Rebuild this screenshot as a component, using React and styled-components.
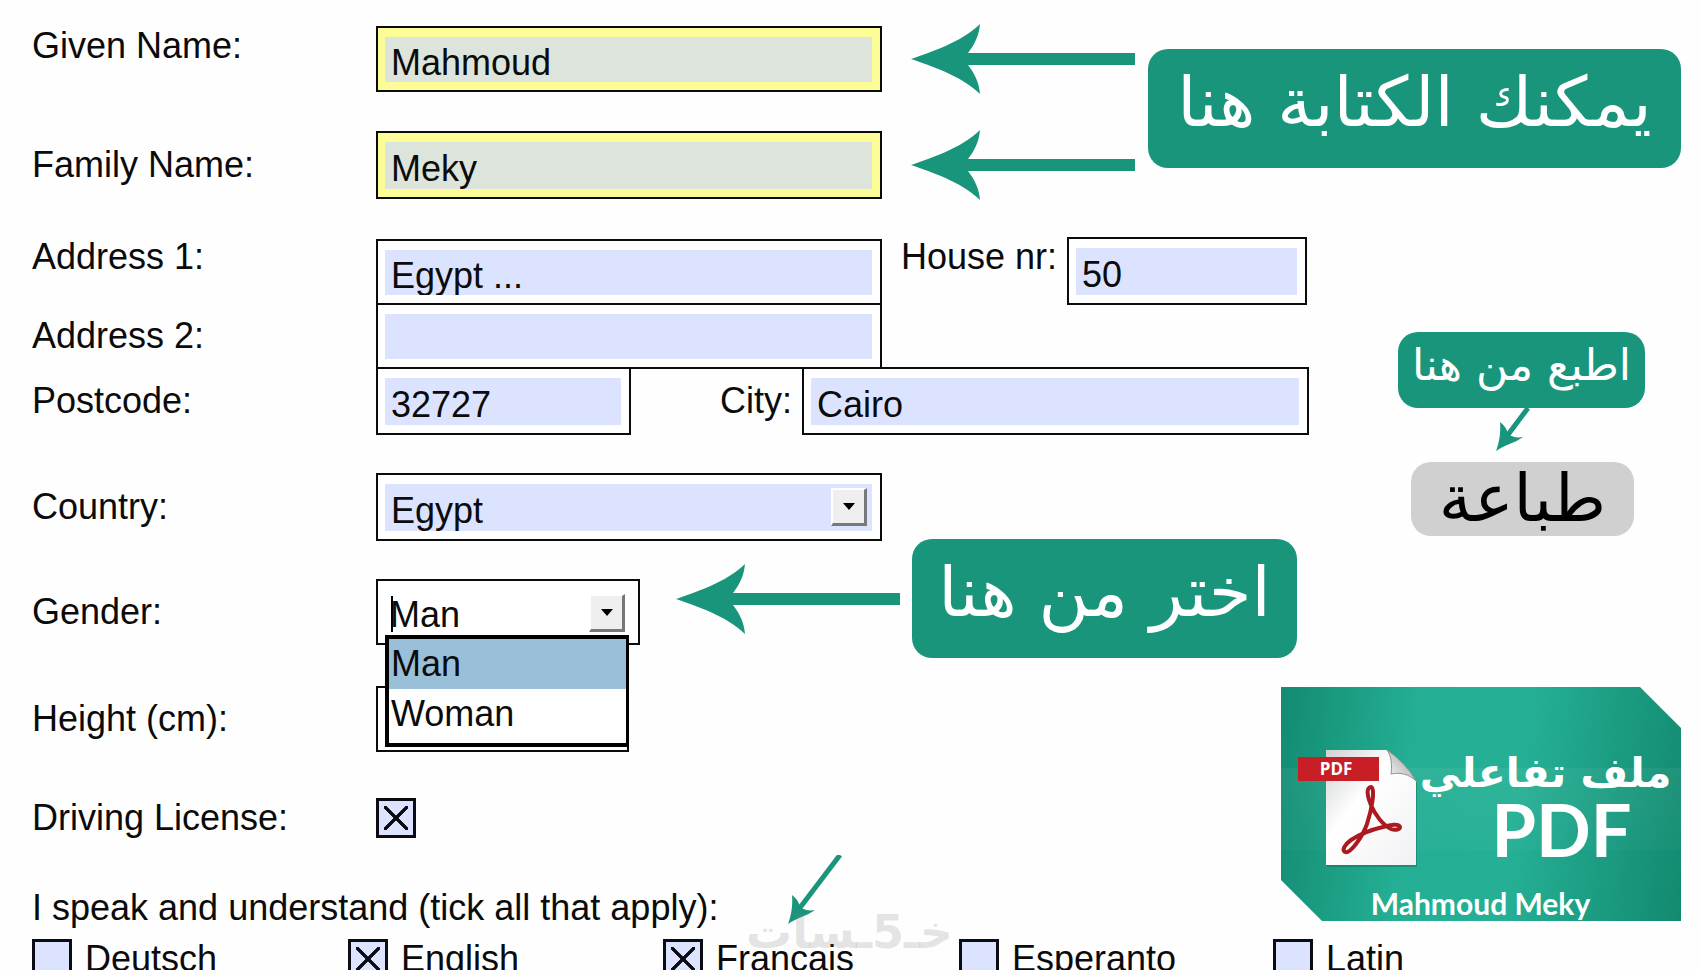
import React,{useState} from 'react'
import styled, {createGlobalStyle} from 'styled-components'

const green = '#19957c';
const fieldBlue = '#dce3ff';

const GlobalStyle = createGlobalStyle`
   *{
       box-sizing:border-box;
   }
   body{
       margin:0;
       background:#fefefe;
       color:#0b0b0b;
       font-family:"Liberation Sans", Arial, sans-serif;
       font-size:36px;
       line-height:40px;
   }
   input, select, button{
       font:inherit;
       color:inherit;
   }
`;
const Page = styled.form`
   height:100vh;
   overflow:hidden;
   padding:26px 19px 0 32px;
`;
const Names = styled.section`
   display:flex;
   align-items:flex-start;
   gap:13px;
   margin-bottom:38px;
`;
const NameRows = styled.div`
   display:flex;
   flex-direction:column;
   gap:39px;
`;
const Body = styled.div`
   display:grid;
   grid-template-columns:1fr 28px 372px;
`;
const Details = styled.section`
   grid-column:1 / 3;
   grid-row:1;
`;
const Side = styled.aside`
   grid-column:2 / 4;
   grid-row:1;
   display:flex;
   flex-direction:column;
   padding-top:95px;
`;
const Row = styled.div`
   display:flex;
   align-items:${props=>props.$align || 'center'};
   margin-top:${props=>props.$space || 0}px;
`;
const Label = styled.label`
   flex:none;
   width:344px;
   white-space:nowrap;
`;
const SideLabel = styled.label`
   flex:1;
   text-align:right;
   white-space:nowrap;
   padding-right:10px;
`;
const HouseLabel = styled.label`
   flex:none;
   width:185px;
   white-space:nowrap;
   padding-left:19px;
`;
const Box = styled.div`
   position:relative;
   flex:none;
   align-self:flex-end;
   width:${props=>props.$width || 506}px;
   height:${props=>props.$short ? 66 : 68}px;
   padding:9px 8px 8px 7px;
   border:2px solid #0b0b0b;
   background:${props=>props.$required ? '#fdfd98' : '#fff'};
`;
const Input = styled.input`
   display:block;
   width:100%;
   height:100%;
   padding:7px 6px 0;
   border:0;
   outline:0;
   border-radius:0;
   background:${props=>props.$required ? '#dce4dc' : fieldBlue};
`;
const Select = styled.select`
   display:block;
   width:100%;
   height:100%;
   padding:${props=>props.$open ? '5px 5px 0' : '7px 6px 0'};
   border:0;
   outline:0;
   border-radius:0;
   appearance:none;
   background:${props=>props.$open ? '#fff' : fieldBlue};
`;
const DropMark = styled.span`
   position:absolute;
   top:13px;
   right:13px;
   display:flex;
   align-items:center;
   justify-content:center;
   width:36px;
   height:38px;
   background:#efefef;
   border:2px solid #fff;
   border-right:3px solid #77777c;
   border-bottom:3px solid #77777c;
   pointer-events:none;
   &::after{
       content:'';
       border:6px solid transparent;
       border-top:7px solid #000;
       border-bottom:0;
   }
`;
const Caret = styled.span`
   position:absolute;
   top:15px;
   left:13px;
   width:2px;
   height:36px;
   background:#000;
`;
const Menu = styled.ul`
   position:absolute;
   z-index:2;
   top:54px;
   left:7px;
   width:244px;
   margin:0;
   padding:0 0 4px;
   list-style:none;
   border:4px solid #000;
   border-right-width:3px;
   background:#fff;
`;
const Option = styled.li`
   height:50px;
   padding:5px 2px;
   background:${props=>props['aria-selected'] ? '#9abfd9' : '#fff'};
   cursor:pointer;
`;
const Check = styled.input`
   appearance:none;
   flex:none;
   width:40px;
   height:40px;
   margin:0;
   border:3px solid #0b0b14;
   background:${fieldBlue};
   &:checked{
       background:
          linear-gradient(45deg, transparent 44%, #0b0b14 46%, #0b0b14 54%, transparent 56%) center / 24px 24px no-repeat,
          linear-gradient(-45deg, transparent 44%, #0b0b14 46%, #0b0b14 54%, transparent 56%) center / 24px 24px no-repeat,
          ${fieldBlue};
   }
`;
const QuestionRow = styled.div`
   display:flex;
   align-items:flex-end;
   gap:70px;
   height:40px;
   margin-top:-33px;
`;
const QuestionArrow = styled.div`
   padding-bottom:4px;
`;
const Languages = styled.div`
   position:relative;
   display:grid;
   grid-template-columns:316px 315px 296px 314px 1fr;
   margin-top:11px;
`;
const Language = styled.label`
   display:flex;
   gap:13px;
`;
const Callout = styled.p`
   flex:${props=>props.$grow ? 1 : 'none'};
   width:${props=>props.$grow ? 'auto' : '385px'};
   height:119px;
   margin:${props=>props.$grow ? '23px 0 0' : 0};
   border-radius:20px;
   background:${green};
   color:#fff;
   font-family:"DejaVu Sans", sans-serif;
   font-size:69px;
   line-height:106px;
   text-align:center;
   white-space:nowrap;
`;
const Pointer = styled.div`
   display:flex;
   align-items:center;
   align-self:flex-start;
   gap:12px;
   margin:-40px 0 -20px 36px;
`;
const ArrowSvg = styled.svg`
   display:block;
   flex:none;
   fill:${green};
`;
const NameArrow = styled.div`
   margin:-3px 0 -3px 29px;
`;
const PrintHint = styled.p`
   width:247px;
   height:76px;
   margin:0 0 0 117px;
   border-radius:20px;
   background:${green};
   color:#fff;
   font-family:"DejaVu Sans", sans-serif;
   font-size:44px;
   line-height:66px;
   text-align:center;
   white-space:nowrap;
`;
const PrintArrow = styled.div`
   height:54px;
   padding-left:215px;
`;
const PrintButton = styled.button`
   width:223px;
   height:74px;
   margin-left:130px;
   padding:0;
   border:0;
   border-radius:20px;
   background:#d0d0d0;
   color:#000;
   font-family:"DejaVu Sans", sans-serif;
   font-size:66px;
   line-height:66px;
   cursor:pointer;
`;
const Card = styled.div`
   display:flex;
   flex-direction:column;
   align-items:center;
   height:234px;
   margin-top:151px;
   padding:62px 8px 0 17px;
   color:#fff;
   background:
      linear-gradient(180deg, transparent 81px, rgba(255,255,255,.05) 81px, rgba(255,255,255,.02) 163px, transparent 163px),
      linear-gradient(97deg, #128b71 0%, #24ae93 32%, #25b095 58%, #128a70 100%);
   clip-path:polygon(0 0, calc(100% - 41px) 0, 100% 41px, 100% 100%, 41px 100%, 0 calc(100% - 41px));
`;
const CardTop = styled.div`
   display:flex;
   width:100%;
   height:144px;
`;
const CardTitle = styled.div`
   flex:1;
   text-align:center;
   font-family:"DejaVu Sans", sans-serif;
   font-weight:bold;
   font-size:41px;
   line-height:48px;
   white-space:nowrap;
`;
const CardWord = styled.div`
   padding-left:32px;
   font-family:Lato, sans-serif;
   font-size:72px;
   line-height:64px;
`;
const CardName = styled.div`
   padding-right:10px;
   font-family:Lato, sans-serif;
   font-weight:bold;
   font-size:30px;
   line-height:36px;
`;
const Watermark = styled.div`
   position:absolute;
   top:-32px;
   left:714px;
   display:flex;
   direction:rtl;
   color:rgba(120,120,120,.2);
   font-family:"DejaVu Sans", sans-serif;
   font-weight:bold;
   font-size:46px;
   line-height:50px;
   pointer-events:none;
`;

const LeftArrow = () => (
    <ArrowSvg width="224" height="72" viewBox="0 0 224 72" aria-hidden="true">
        <path d="M0 36C20 29 49 20 69 1C68 12 64 21 57 30H224V42H57C64 51 68 60 69 71C49 52 20 43 0 36Z" />
    </ArrowSvg>
)

const DownArrow = ({width, height}) => (
    <ArrowSvg width={width} height={height} viewBox={`0 0 ${width} ${height}`} aria-hidden="true">
        <line x1={width - 2} y1="0" x2="11" y2={height - 15} stroke={green} strokeWidth="5" />
        <path transform={`translate(0 ${height})`} d="M0 0C3 -8 5 -18 4 -29C8 -26 11 -22 12 -17C16 -14 21 -13 27 -14C19 -8 8 -6 0 0Z" />
    </ArrowSvg>
)

const PdfIcon = () => (
    <svg width="120" height="118" viewBox="0 0 120 118" aria-hidden="true">
        <defs>
            <linearGradient id="sheet" x1="0" y1="0" x2="1" y2="1">
                <stop offset="0" stopColor="#cfd1d2" />
                <stop offset=".4" stopColor="#ffffff" />
                <stop offset="1" stopColor="#f1f1f4" />
            </linearGradient>
            <linearGradient id="fold" x1="0" y1="1" x2="1" y2="0">
                <stop offset="0" stopColor="#ffffff" />
                <stop offset="1" stopColor="#8f9496" />
            </linearGradient>
        </defs>
        <path d="M29 3H90Q108 17 119 34V118H29Z" fill="#0d6f5b" opacity=".5" />
        <path d="M28 1H89Q107 14 118 32V116H28Z" fill="url(#sheet)" />
        <path d="M89 1C94 8 94 18 93 25C102 23 111 25 118 32Q108 14 89 1Z" fill="url(#fold)" stroke="#8d9193" strokeWidth="1" />
        <rect x="0" y="8" width="81" height="24" fill="#c81f27" />
        <text x="38" y="26" textAnchor="middle" fill="#fff" fontFamily="Open Sans, sans-serif" fontWeight="bold" fontSize="17">PDF</text>
        <path
            d="M73 38C68 38 69 48 73 56C77 66 85 76 93 80C98 82 102 80 102 78C101 74 92 76 85 78C72 81 62 85 53 91C46 96 44 101 47 103C52 105 64 89 69 75C73 63 78 39 73 38Z"
            fill="none" stroke="#ab1a20" strokeWidth="4" strokeLinejoin="round"
        />
    </svg>
)

const Question = () => (
    <QuestionRow>
        <span>I speak and understand (tick all that apply):</span>
        <QuestionArrow><DownArrow width={54} height={69} /></QuestionArrow>
    </QuestionRow>
)

const languages = ['Deutsch', 'English', 'Français', 'Esperanto', 'Latin'];

function App() {
    const[values, setValues] = useState({
        given:'Mahmoud', family:'Meky', address1:'Egypt ...', address2:'',
        house:'50', postcode:'32727', city:'Cairo', country:'Egypt', gender:'Man'
    });
    const[license, setLicense] = useState(true);
    const[spoken, setSpoken] = useState(['English', 'Français']);

    const set = (name, value) => setValues({...values, [name]:value});
    const bind = name => ({id:name, name, value:values[name], onChange:e=>set(name, e.target.value)});
    const toggle = lang => setSpoken(
        spoken.includes(lang) ? spoken.filter(l=>l!==lang) : [...spoken, lang]
    );

    return (
        <>
            <GlobalStyle />
            <Page onSubmit={e=>e.preventDefault()}>
                <Names>
                    <NameRows>
                        <Row $align="flex-start">
                            <Label htmlFor="given">Given Name:</Label>
                            <Box $short $required><Input type="text" $required {...bind('given')} /></Box>
                            <NameArrow><LeftArrow /></NameArrow>
                        </Row>
                        <Row>
                            <Label htmlFor="family">Family Name:</Label>
                            <Box $required><Input type="text" $required {...bind('family')} /></Box>
                            <NameArrow><LeftArrow /></NameArrow>
                        </Row>
                    </NameRows>
                    <Callout $grow lang="ar" dir="rtl">يمكنك الكتابة هنا</Callout>
                </Names>

                <Body>
                    <Details>
                        <Row $align="flex-start">
                            <Label htmlFor="address1">Address 1:</Label>
                            <Box $short><Input type="text" {...bind('address1')} /></Box>
                            <HouseLabel htmlFor="house">House nr:</HouseLabel>
                            <Box $width={240}><Input type="text" {...bind('house')} /></Box>
                        </Row>
                        <Row $space={-2}>
                            <Label htmlFor="address2">Address 2:</Label>
                            <Box $short><Input type="text" {...bind('address2')} /></Box>
                        </Row>
                        <Row $space={-2}>
                            <Label htmlFor="postcode">Postcode:</Label>
                            <Box $width={255}><Input type="text" {...bind('postcode')} /></Box>
                            <SideLabel htmlFor="city">City:</SideLabel>
                            <Box $width={507}><Input type="text" {...bind('city')} /></Box>
                        </Row>
                        <Row $space={38}>
                            <Label htmlFor="country">Country:</Label>
                            <Box>
                                <Select {...bind('country')}><option>Egypt</option></Select>
                                <DropMark />
                            </Box>
                        </Row>
                        <Row $space={38}>
                            <Label htmlFor="gender">Gender:</Label>
                            <Box $short $width={264}>
                                <Select $open {...bind('gender')}>
                                    <option>Man</option>
                                    <option>Woman</option>
                                </Select>
                                <Caret />
                                <DropMark />
                                <Menu role="listbox" aria-label="Gender">
                                    {['Man', 'Woman'].map(g=>(
                                        <Option key={g} role="option" aria-selected={values.gender===g} onClick={()=>set('gender', g)}>{g}</Option>
                                    ))}
                                </Menu>
                            </Box>
                            <Pointer>
                                <LeftArrow />
                                <Callout lang="ar" dir="rtl">اختر من هنا</Callout>
                            </Pointer>
                        </Row>
                        <Row $space={41}>
                            <Label htmlFor="height">Height (cm):</Label>
                            <Box $short $width={253}><Input type="text" id="height" name="height" /></Box>
                        </Row>
                        <Row $space={46}>
                            <Label htmlFor="license">Driving License:</Label>
                            <Check type="checkbox" id="license" checked={license} onChange={()=>setLicense(!license)} />
                        </Row>
                    </Details>

                    <Side>
                        <PrintHint lang="ar" dir="rtl">اطبع من هنا</PrintHint>
                        <PrintArrow><DownArrow width={34} height={43} /></PrintArrow>
                        <PrintButton type="button" lang="ar" onClick={()=>window.print()}>طباعة</PrintButton>
                        <Card>
                            <CardTop>
                                <PdfIcon />
                                <CardTitle>
                                    <div lang="ar" dir="rtl">ملف تفاعلي</div>
                                    <CardWord>PDF</CardWord>
                                </CardTitle>
                            </CardTop>
                            <CardName>Mahmoud Meky</CardName>
                        </Card>
                    </Side>
                </Body>

                <Question />
                <Languages>
                    {languages.map(lang=>(
                        <Language key={lang}>
                            <Check type="checkbox" checked={spoken.includes(lang)} onChange={()=>toggle(lang)} />
                            {lang}
                        </Language>
                    ))}
                    <Watermark lang="ar">
                        <span>خـ</span><span>5</span><span>ـسات</span>
                    </Watermark>
                </Languages>
            </Page>
        </>
    )
}

export default App
